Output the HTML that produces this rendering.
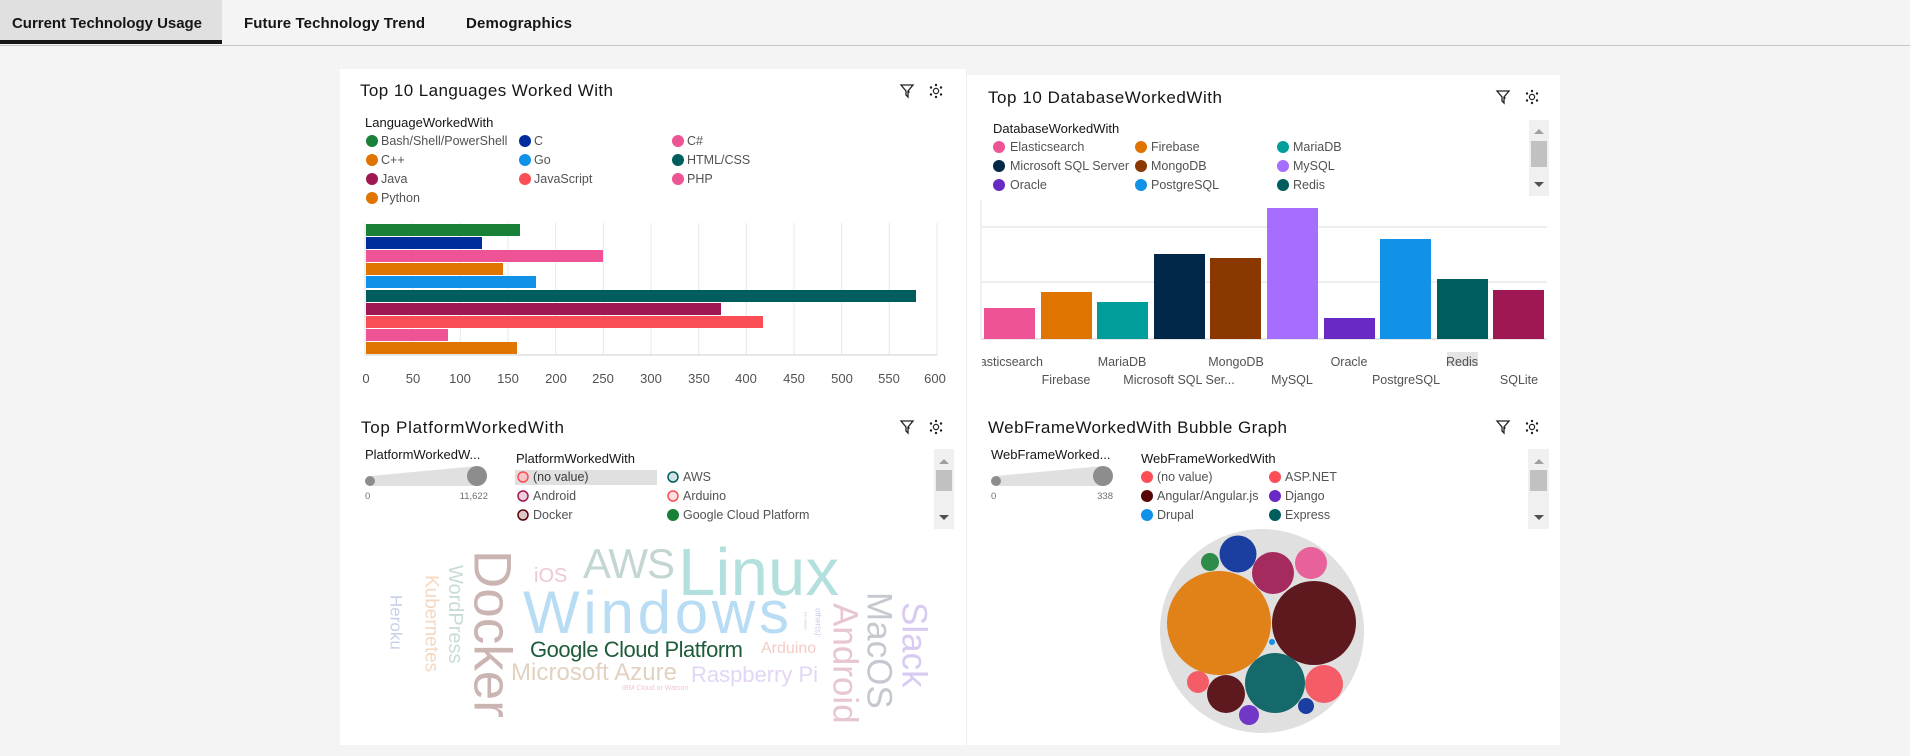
<!DOCTYPE html>
<html><head><meta charset="utf-8">
<style>
html,body{margin:0;padding:0;background:#f4f4f4;width:1910px;height:756px;overflow:hidden;font-family:"Liberation Sans",sans-serif;}
svg{position:absolute;left:0;top:0;}
</style></head>
<body>
<svg width="1910" height="756" viewBox="0 0 1910 756" font-family="Liberation Sans, sans-serif">
<defs>
<g id="icons" fill="none" stroke="#222" stroke-width="1.3">
  <path d="M-6,-6 H6 L1,0 V6 L-1,4 V0 Z"/>
  <circle cx="1.5" cy="1" r="1.1" fill="#222" stroke="none"/>
  <g fill="#222" stroke="none" transform="translate(29,0)">
    <circle cx="0" cy="0" r="2.6" fill="none" stroke="#222" stroke-width="1.2"/>
    <circle cx="0" cy="-6" r="1.2"/><circle cx="5" cy="-3.5" r="1.2"/><circle cx="5" cy="3.5" r="1.2"/>
    <circle cx="0" cy="6" r="1.2"/><circle cx="-5" cy="3.5" r="1.2"/><circle cx="-5" cy="-3.5" r="1.2"/>
  </g>
</g>
</defs>
<!-- tab bar -->
<rect x="0" y="0" width="1910" height="45" fill="#f4f4f4"/>
<rect x="0" y="0" width="222" height="44" fill="#e0e0e0"/>
<rect x="0" y="40" width="222" height="4" fill="#161616"/>
<rect x="0" y="45" width="1910" height="1" fill="#c6c6c6"/>
<g font-size="15" font-weight="bold" fill="#161616">
<text x="12" y="28" textLength="190">Current Technology Usage</text>
<text x="244" y="28" textLength="181">Future Technology Trend</text>
<text x="466" y="28" textLength="106">Demographics</text>
</g>

<!-- panels -->
<rect x="340" y="69" width="626" height="334" fill="#fff"/>
<rect x="967" y="75" width="593" height="328" fill="#fff"/>
<rect x="340" y="403" width="626" height="342" fill="#fff"/>
<rect x="967" y="403" width="593" height="342" fill="#fff"/>
<rect x="966" y="69" width="1" height="676" fill="#eeeeee"/>

<!-- ===== TL: languages ===== -->
<text x="360" y="96" font-size="17" fill="#161616" textLength="253">Top 10 Languages Worked With</text>
<use href="#icons" x="907" y="91"/>
<text x="365" y="127" font-size="13" fill="#161616">LanguageWorkedWith</text>
<g font-size="12.5" fill="#525252">
<circle cx="372" cy="141" r="6" fill="#198038"/><text x="381" y="145">Bash/Shell/PowerShell</text>
<circle cx="525" cy="141" r="6" fill="#002d9c"/><text x="534" y="145">C</text>
<circle cx="678" cy="141" r="6" fill="#ee5396"/><text x="687" y="145">C#</text>
<circle cx="372" cy="160" r="6" fill="#e07400"/><text x="381" y="164">C++</text>
<circle cx="525" cy="160" r="6" fill="#1192e8"/><text x="534" y="164">Go</text>
<circle cx="678" cy="160" r="6" fill="#005d5d"/><text x="687" y="164">HTML/CSS</text>
<circle cx="372" cy="179" r="6" fill="#9f1853"/><text x="381" y="183">Java</text>
<circle cx="525" cy="179" r="6" fill="#fa4d56"/><text x="534" y="183">JavaScript</text>
<circle cx="678" cy="179" r="6" fill="#ee5396"/><text x="687" y="183">PHP</text>
<circle cx="372" cy="198" r="6" fill="#e07400"/><text x="381" y="202">Python</text>
</g>
<g stroke="#e8e8e8" stroke-width="1">
<line x1="412.7" y1="223" x2="412.7" y2="355"/><line x1="460.3" y1="223" x2="460.3" y2="355"/>
<line x1="508" y1="223" x2="508" y2="355"/><line x1="555.7" y1="223" x2="555.7" y2="355"/>
<line x1="603.3" y1="223" x2="603.3" y2="355"/><line x1="651" y1="223" x2="651" y2="355"/>
<line x1="698.7" y1="223" x2="698.7" y2="355"/><line x1="746.3" y1="223" x2="746.3" y2="355"/>
<line x1="794" y1="223" x2="794" y2="355"/><line x1="841.7" y1="223" x2="841.7" y2="355"/>
<line x1="889.3" y1="223" x2="889.3" y2="355"/><line x1="937" y1="223" x2="937" y2="355"/>
</g>
<line x1="365" y1="355" x2="937" y2="355" stroke="#cfcfcf"/>
<line x1="365" y1="223" x2="365" y2="355" stroke="#e0e0e0"/>
<g>
<rect x="366" y="224" width="154" height="12" fill="#198038"/>
<rect x="366" y="237" width="116" height="12" fill="#002d9c"/>
<rect x="366" y="250" width="237" height="12" fill="#ee5396"/>
<rect x="366" y="263" width="137" height="12" fill="#e07400"/>
<rect x="366" y="276" width="170" height="12" fill="#1192e8"/>
<rect x="366" y="290" width="550" height="12" fill="#005d5d"/>
<rect x="366" y="303" width="355" height="12" fill="#9f1853"/>
<rect x="366" y="316" width="397" height="12" fill="#fa4d56"/>
<rect x="366" y="329" width="82" height="12" fill="#ee5396"/>
<rect x="366" y="342" width="151" height="12" fill="#e07400"/>
</g>
<g font-size="13" fill="#525252" text-anchor="middle">
<text x="366" y="383">0</text><text x="413" y="383">50</text><text x="460" y="383">100</text>
<text x="508" y="383">150</text><text x="556" y="383">200</text><text x="603" y="383">250</text>
<text x="651" y="383">300</text><text x="699" y="383">350</text><text x="746" y="383">400</text>
<text x="794" y="383">450</text><text x="842" y="383">500</text><text x="889" y="383">550</text>
<text x="935" y="383">600</text>
</g>

<!-- ===== TR: databases ===== -->
<text x="988" y="103" font-size="17" fill="#161616" textLength="234">Top 10 DatabaseWorkedWith</text>
<use href="#icons" x="1503" y="97"/>
<text x="993" y="133" font-size="13" fill="#161616">DatabaseWorkedWith</text>
<g font-size="12.5" fill="#525252">
<circle cx="999" cy="147" r="6" fill="#ee5396"/><text x="1010" y="151">Elasticsearch</text>
<circle cx="1141" cy="147" r="6" fill="#e07400"/><text x="1151" y="151">Firebase</text>
<circle cx="1283" cy="147" r="6" fill="#009d9a"/><text x="1293" y="151">MariaDB</text>
<circle cx="999" cy="166" r="6" fill="#012749"/><text x="1010" y="170">Microsoft SQL Server</text>
<circle cx="1141" cy="166" r="6" fill="#8a3800"/><text x="1151" y="170">MongoDB</text>
<circle cx="1283" cy="166" r="6" fill="#a56eff"/><text x="1293" y="170">MySQL</text>
<circle cx="999" cy="185" r="6" fill="#6929c4"/><text x="1010" y="189">Oracle</text>
<circle cx="1141" cy="185" r="6" fill="#1192e8"/><text x="1151" y="189">PostgreSQL</text>
<circle cx="1283" cy="185" r="6" fill="#005d5d"/><text x="1293" y="189">Redis</text>
</g>
<rect x="1529" y="120" width="20" height="76" fill="#f0f0f0"/>
<rect x="1531" y="141" width="16" height="26" fill="#c1c1c1"/>
<path d="M1534,134 l5,-5 l5,5z" fill="#a0a0a0"/><path d="M1534,182 l5,5 l5,-5z" fill="#505050"/>
<line x1="981" y1="200" x2="981" y2="339" stroke="#e0e0e0"/>
<line x1="981" y1="227" x2="1547" y2="227" stroke="#e8e8e8" stroke-width="1.5"/>
<line x1="981" y1="282" x2="1547" y2="282" stroke="#e8e8e8" stroke-width="1.5"/>
<line x1="981" y1="339" x2="1547" y2="339" stroke="#cfcfcf"/>
<rect x="984" y="308" width="51" height="31" fill="#ee5396"/>
<rect x="1041" y="292" width="51" height="47" fill="#e07400"/>
<rect x="1097" y="302" width="51" height="37" fill="#009d9a"/>
<rect x="1154" y="254" width="51" height="85" fill="#012749"/>
<rect x="1210" y="258" width="51" height="81" fill="#8a3800"/>
<rect x="1267" y="208" width="51" height="131" fill="#a56eff"/>
<rect x="1324" y="318" width="51" height="21" fill="#6929c4"/>
<rect x="1380" y="239" width="51" height="100" fill="#1192e8"/>
<rect x="1437" y="279" width="51" height="60" fill="#005d5d"/>
<rect x="1493" y="290" width="51" height="49" fill="#9f1853"/>
<rect x="1447" y="352" width="31" height="14" fill="#e4e4e4"/>
<g font-size="12.5" fill="#525252" text-anchor="middle">
<text x="1010" y="366">lasticsearch</text>
<text x="1122" y="366">MariaDB</text>
<text x="1236" y="366">MongoDB</text>
<text x="1349" y="366">Oracle</text>
<text x="1462" y="366">Redis</text>
<text x="1066" y="384">Firebase</text>
<text x="1179" y="384">Microsoft SQL Ser...</text>
<text x="1292" y="384">MySQL</text>
<text x="1406" y="384">PostgreSQL</text>
<text x="1519" y="384">SQLite</text>
</g>
<rect x="967" y="352" width="15" height="36" fill="#fff"/>

<!-- ===== BL: platforms ===== -->
<text x="361" y="433" font-size="17" fill="#161616" textLength="203">Top PlatformWorkedWith</text>
<use href="#icons" x="907" y="427"/>
<text x="365" y="459" font-size="13" fill="#161616">PlatformWorkedW...</text>
<path d="M370,476 L477,466 L477,486 L370,486 Z" fill="#e0e0e0"/>
<circle cx="370" cy="481" r="5" fill="#8d8d8d"/>
<circle cx="477" cy="476" r="10" fill="#8d8d8d"/>
<g font-size="9.5" fill="#6f6f6f"><text x="365" y="499">0</text><text x="488" y="499" text-anchor="end">11,622</text></g>
<text x="516" y="463" font-size="13" fill="#161616">PlatformWorkedWith</text>
<rect x="515" y="470" width="142" height="15" fill="#e0e0e0"/>
<g font-size="12.5" fill="#525252" stroke-width="1.5">
<circle cx="523" cy="477" r="5" fill="#f8c6c8" stroke="#fa4d56"/><text x="533" y="481" fill="#393939">(no value)</text>
<circle cx="523" cy="496" r="5" fill="#ecd0dc" stroke="#9f1853"/><text x="533" y="500">Android</text>
<circle cx="523" cy="515" r="5" fill="#dcc8c8" stroke="#570408"/><text x="533" y="519">Docker</text>
<circle cx="673" cy="477" r="5" fill="#d2e3e3" stroke="#005d5d"/><text x="683" y="481">AWS</text>
<circle cx="673" cy="496" r="5" fill="#fde0e0" stroke="#fa4d56"/><text x="683" y="500">Arduino</text>
<circle cx="673" cy="515" r="6" fill="#198038"/><text x="683" y="519">Google Cloud Platform</text>
</g>
<rect x="934" y="449" width="20" height="80" fill="#f0f0f0"/>
<rect x="936" y="470" width="16" height="21" fill="#c1c1c1"/>
<path d="M939,464 l5,-5 l5,5z" fill="#a0a0a0"/><path d="M939,515 l5,5 l5,-5z" fill="#505050"/>
<!-- word cloud -->
<g font-family="Liberation Sans, sans-serif">
<text x="678" y="595" font-size="67" fill="#b3e0dd" textLength="161">Linux</text>
<text x="583" y="578" font-size="42" fill="#c3d6d4" textLength="92">AWS</text>
<text x="523" y="633" font-size="60" fill="#b9dcf5" textLength="266">Windows</text>
<text x="534" y="582" font-size="20" fill="#ebc8d3">iOS</text>
<text x="530" y="657" font-size="22" fill="#1f5c3a" textLength="213">Google Cloud Platform</text>
<text x="511" y="680" font-size="24" fill="#e2d2c0" textLength="166">Microsoft Azure</text>
<text x="691" y="682" font-size="22" fill="#e2d6f6" textLength="127">Raspberry Pi</text>
<text x="622" y="690" font-size="7" fill="#f2c8cc">IBM Cloud or Watson</text>
<text x="761" y="653" font-size="16" fill="#f6cbc6">Arduino</text>
<text x="492" y="550" font-size="53" fill="#cbb5b2" writing-mode="tb">Docker</text>
<text x="455" y="565" font-size="20" fill="#c8dcd5" writing-mode="tb">WordPress</text>
<text x="431" y="575" font-size="19" fill="#f4d8c1" writing-mode="tb">Kubernetes</text>
<text x="396" y="595" font-size="17" fill="#c8cfe8" writing-mode="tb">Heroku</text>
<text x="818" y="608" font-size="8" fill="#c8cfe8" writing-mode="tb">other(s):</text>
<text x="806" y="612" font-size="4" fill="#d8c0c8" writing-mode="tb">(no value)</text>
<text x="845" y="603" font-size="35" fill="#e7c5d1" writing-mode="tb">Android</text>
<text x="879" y="592" font-size="35" fill="#c4c9cf" writing-mode="tb">MacOS</text>
<text x="914" y="602" font-size="35" fill="#d9caf2" writing-mode="tb">Slack</text>
</g>

<!-- ===== BR: bubbles ===== -->
<text x="988" y="433" font-size="17" fill="#161616" textLength="299">WebFrameWorkedWith Bubble Graph</text>
<use href="#icons" x="1503" y="427"/>
<text x="991" y="459" font-size="13" fill="#161616">WebFrameWorked...</text>
<path d="M996,476 L1103,466 L1103,486 L996,486 Z" fill="#e0e0e0"/>
<circle cx="996" cy="481" r="5" fill="#8d8d8d"/>
<circle cx="1103" cy="476" r="10" fill="#8d8d8d"/>
<g font-size="9.5" fill="#6f6f6f"><text x="991" y="499">0</text><text x="1113" y="499" text-anchor="end">338</text></g>
<text x="1141" y="463" font-size="13" fill="#161616">WebFrameWorkedWith</text>
<g font-size="12.5" fill="#525252">
<circle cx="1147" cy="477" r="6" fill="#fa4d56"/><text x="1157" y="481">(no value)</text>
<circle cx="1147" cy="496" r="6" fill="#570408"/><text x="1157" y="500">Angular/Angular.js</text>
<circle cx="1147" cy="515" r="6" fill="#1192e8"/><text x="1157" y="519">Drupal</text>
<circle cx="1275" cy="477" r="6" fill="#fa4d56"/><text x="1285" y="481">ASP.NET</text>
<circle cx="1275" cy="496" r="6" fill="#6929c4"/><text x="1285" y="500">Django</text>
<circle cx="1275" cy="515" r="6" fill="#005d5d"/><text x="1285" y="519">Express</text>
</g>
<rect x="1528" y="449" width="21" height="80" fill="#f0f0f0"/>
<rect x="1530" y="470" width="17" height="21" fill="#c1c1c1"/>
<path d="M1534,464 l5,-5 l5,5z" fill="#a0a0a0"/><path d="M1534,515 l5,5 l5,-5z" fill="#505050"/>
<ellipse cx="1262" cy="631" rx="102" ry="102" fill="#e0e0e0"/>
<circle cx="1219" cy="623" r="52" fill="#e08218"/>
<circle cx="1314" cy="623" r="42" fill="#5e191e"/>
<circle cx="1275" cy="683" r="30" fill="#16696a"/>
<circle cx="1238" cy="554" r="18.5" fill="#1a3fa0"/>
<circle cx="1273" cy="573" r="21" fill="#a52a5e"/>
<circle cx="1311" cy="563" r="16" fill="#e8619a"/>
<circle cx="1210" cy="562" r="9" fill="#2e8b4a"/>
<circle cx="1324" cy="684" r="19" fill="#f45d67"/>
<circle cx="1226" cy="694" r="19" fill="#5e191e"/>
<circle cx="1198" cy="682" r="11" fill="#f45d67"/>
<circle cx="1249" cy="715" r="10" fill="#7138c8"/>
<circle cx="1306" cy="706" r="8" fill="#1a3fa0"/>
<circle cx="1272" cy="642" r="3" fill="#1192e8"/>
</svg>
</body></html>
